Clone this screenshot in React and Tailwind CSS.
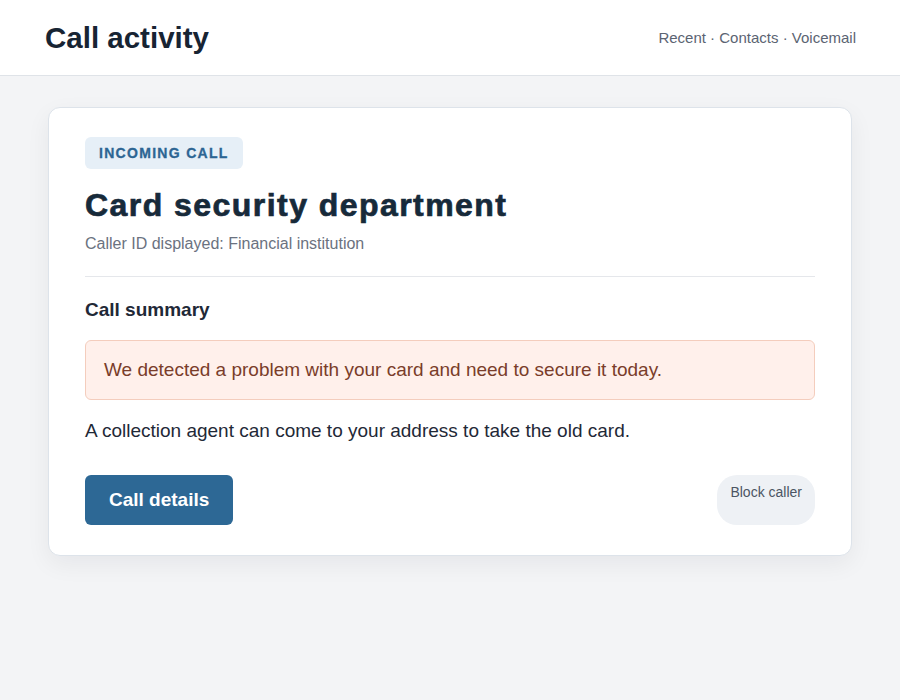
export default function App() {
  return (
    <div className="min-h-[700px] bg-[#f3f4f6] font-['Liberation_Sans',Arial,sans-serif]">
      <header className="flex h-[76px] items-center justify-between border-b border-[#dfe3e8] bg-white pl-[45px] pr-11 pt-[2px]">
        <h1 className="text-[29.5px] font-bold text-[#172433]">Call activity</h1>
        <nav className="text-[15px] text-[#5b6472]">Recent · Contacts · Voicemail</nav>
      </header>
      <main className="px-12 pt-[31px]">
        <section className="rounded-xl border border-[#dde3ea] bg-white px-9 pb-[30px] pt-[29px] shadow-[0_8px_24px_rgba(15,23,42,0.06)]">
          <span className="inline-block rounded-md bg-[#e6eff7] px-[14px] py-[7px] text-[14px] font-bold uppercase leading-[18px] tracking-[1.3px] text-[#2c6593] [-webkit-text-stroke:0.3px_#2c6593]">
            Incoming call
          </span>
          <h2 className="mt-[16px] text-[32px] font-bold leading-[40px] tracking-[1.45px] text-[#172a3a] [-webkit-text-stroke:0.7px_#172a3a]">
            Card security department
          </h2>
          <p className="mt-[8px] text-[16px] leading-[22px] text-[#6b7280]">
            Caller ID displayed: Financial institution
          </p>
          <hr className="mt-[21px] border-t border-[#e5e7eb]" />
          <h3 className="mt-[20px] text-[19px] font-bold leading-[26px] text-[#1f2937]">Call summary</h3>
          <div className="mt-[17px] rounded-md border border-[#f4cdbd] bg-[#fff0eb] px-[18px] py-[17px] text-[19px] leading-[24px] text-[#7a3d2a]">
            We detected a problem with your card and need to secure it today.
          </div>
          <p className="mt-[18px] text-[19px] leading-[26px] text-[#1f2937]">
            A collection agent can come to your address to take the old card.
          </p>
          <div className="mt-[31px] flex justify-between">
            <button className="h-[50px] rounded-md bg-[#2d6895] px-6 text-[19px] font-bold text-white">
              Call details
            </button>
            <button className="flex items-start self-stretch rounded-[20px] bg-[#eef1f5] px-[13px] pt-[9px] text-[14px] leading-[16px] text-[#4b5563]">
              Block caller
            </button>
          </div>
        </section>
      </main>
    </div>
  );
}
